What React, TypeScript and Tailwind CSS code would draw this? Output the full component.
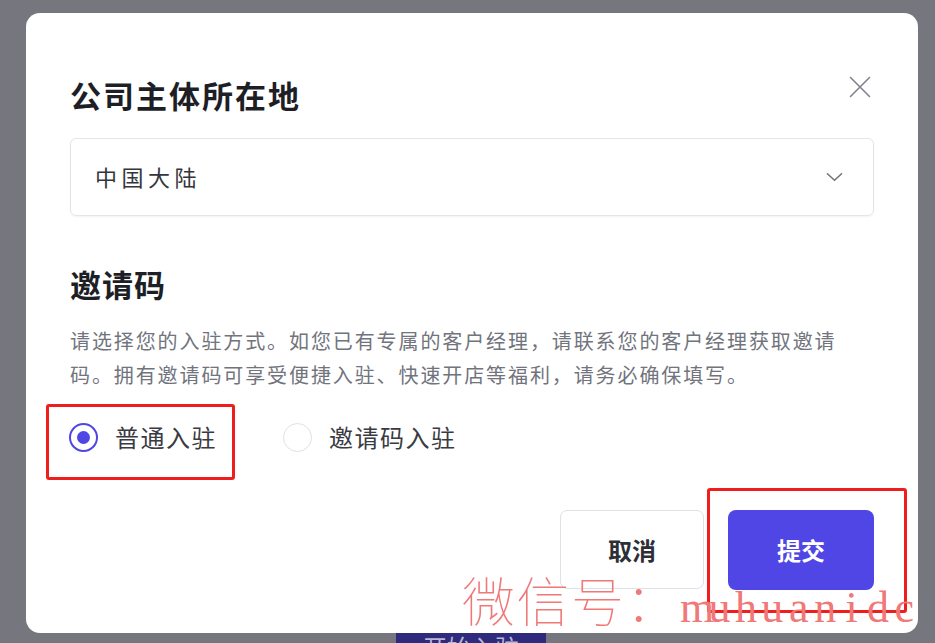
import { useState } from "react";

const CloseIcon = () => (
  <svg viewBox="0 0 22 22" className="w-[22px] h-[22px]" fill="none" stroke="#80838c" strokeWidth={1.6} strokeLinecap="round">
    <path d="M1.5 1.5l19 19M20.5 1.5l-19 19" />
  </svg>
);

const ChevronDown = () => (
  <svg viewBox="0 0 18 10" className="w-[17px] h-[10px]" fill="none" stroke="#6f727b" strokeWidth={1.6} strokeLinecap="round" strokeLinejoin="round">
    <path d="M1.5 1.5L9 8.5l7.5-7" />
  </svg>
);

const Radio = ({ checked, label, onClick }: { checked: boolean; label: string; onClick: () => void }) => (
  <button type="button" onClick={onClick} className="flex items-center gap-x-[17px] cursor-pointer">
    {checked ? (
      <span className="w-[29px] h-[29px] rounded-full border-[2.5px] border-[#4f46e5] flex items-center justify-center">
        <span className="w-[13px] h-[13px] rounded-full bg-[#4f46e5]" />
      </span>
    ) : (
      <span className="w-[29px] h-[29px] rounded-full border-[1.5px] border-[#dfe1e8] bg-white" />
    )}
    <span className="text-[24px] leading-[30px] tracking-[1.5px] text-[#3a3b42]">{label}</span>
  </button>
);

const mark = "muhuanidc".split("");

export default function App() {
  const [mode, setMode] = useState("normal");

  return (
    <div className="relative h-[643px] w-[935px] overflow-hidden bg-[#76777e] font-['Noto_Sans_CJK_SC',sans-serif]">
      {/* modal */}
      <div className="mt-[13px] ml-[26px] w-[892px] rounded-[14px] bg-white px-[44px] pt-[62px] pb-[43px] relative z-10">
        <div className="flex items-start justify-between">
          <h2 className="text-[31px] leading-[40px] font-bold tracking-[2px] text-[#1e1f26]">公司主体所在地</h2>
          <button type="button" className="mt-[1px] mr-[3px]">
            <CloseIcon />
          </button>
        </div>

        <div className="mt-[23px] h-[78px] rounded-[6px] border-[1.5px] border-[#e3e5eb] shadow-[0_1px_2px_rgba(0,0,0,0.05)] flex items-center justify-between pl-[24px] pr-[30px]">
          <span className="text-[22px] leading-[30px] -mt-[3px] tracking-[4.5px] text-[#34363d]">中国大陆</span>
          <ChevronDown />
        </div>

        <h3 className="mt-[48px] text-[31px] leading-[40px] font-bold tracking-[1px] text-[#1e1f26]">邀请码</h3>

        <p className="mt-[20px] text-[20px] leading-[34px] tracking-[1.9px] text-[#71747d]">
          请选择您的入驻方式。如您已有专属的客户经理，请联系您的客户经理获取邀请
          <br />
          码。拥有邀请码可享受便捷入驻、快速开店等福利，请务必确保填写。
        </p>

        <div className="mt-[30px] flex items-center gap-x-[66px] -ml-[1px]">
          <Radio checked={mode === "normal"} label="普通入驻" onClick={() => setMode("normal")} />
          <Radio checked={mode === "invite"} label="邀请码入驻" onClick={() => setMode("invite")} />
        </div>

        <div className="mt-[58px] flex justify-end gap-x-[24px]">
          <button type="button" className="w-[144px] h-[79px] rounded-[7px] border-[1.5px] border-[#dde1e8] bg-white text-[24px] font-bold text-[#2d2f36]">
            取消
          </button>
          <button type="button" className="w-[146px] h-[80px] rounded-[8px] bg-[#4f46e5] text-[24px] font-bold text-white">
            提交
          </button>
        </div>
      </div>

      {/* button behind the overlay */}
      <div className="ml-[396px] w-[150px] h-[50px] bg-[#2f2b7c] text-[24px] leading-none text-[#b8b7d8] text-center pt-[2px]">
        开始入驻
      </div>

      {/* annotation boxes */}
      <div className="absolute z-20 left-[46px] top-[404px] w-[189px] h-[76px] rounded-[3px] border-[3px] border-[#f01d1d]" />
      <div className="absolute z-20 left-[707px] top-[488px] w-[200px] h-[125px] rounded-[3px] border-[3px] border-[#f01d1d]" />

      {/* watermark */}
      <div className="absolute z-30 left-[462px] top-[573px] flex items-baseline whitespace-nowrap leading-[52px] text-[#f07878]">
        <span className="text-[53px] font-thin tracking-[1.5px]">微信号：</span>
        {mark.map((c, i) => (
          <span key={i} className="inline-block w-[26.4px] text-center text-[44px] font-['Liberation_Serif',serif]">
            {c}
          </span>
        ))}
      </div>
    </div>
  );
}
